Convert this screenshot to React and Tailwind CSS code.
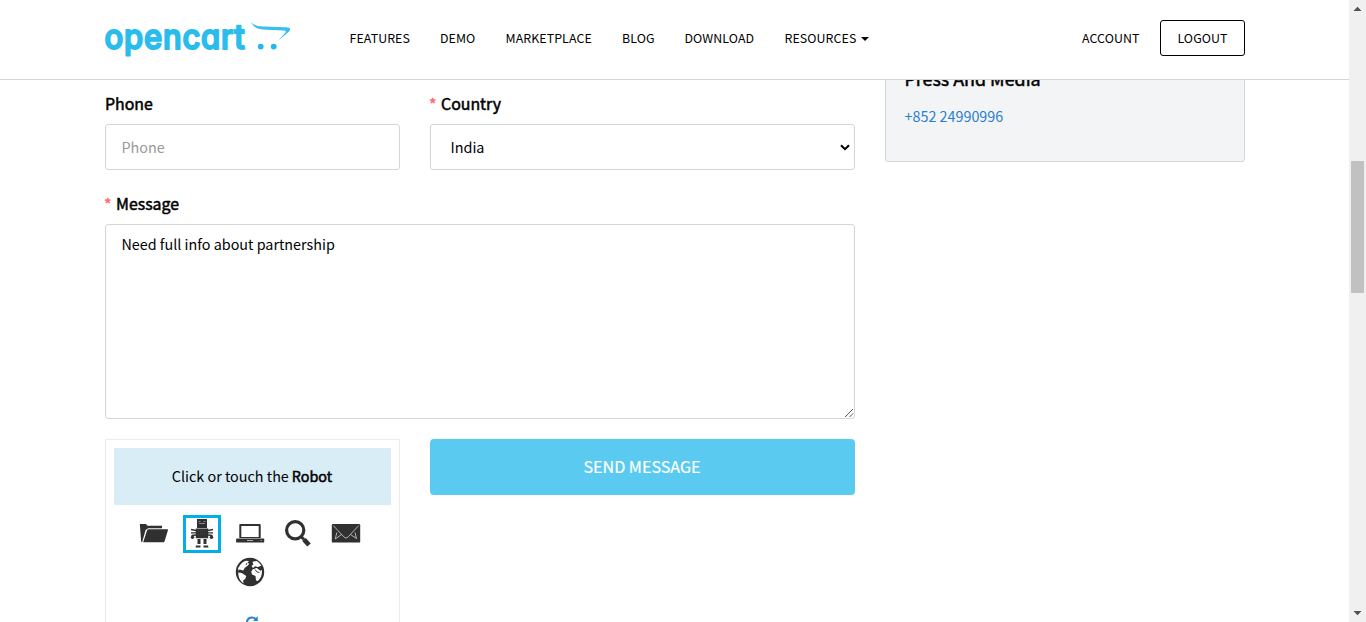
const navItems = [
  ['FEATURES', 'w-[90.5px]'],
  ['DEMO', 'w-[65.5px]'],
  ['MARKETPLACE', 'w-[116.5px]'],
  ['BLOG', 'w-[62.5px]'],
  ['DOWNLOAD', 'w-[100px]'],
];

function Logo() {
  return (
    <svg className="block h-[44px] w-[188px] shrink-0" viewBox="0 -3 188 44">
      <defs>
        <linearGradient id="sky" x1="0" y1="0" x2="0" y2="1">
          <stop offset="0" stopColor="#41c4f0" />
          <stop offset="1" stopColor="#22b8ee" />
        </linearGradient>
      </defs>
      <text
        x="0.6"
        y="29.6"
        fontFamily="Inter, sans-serif"
        fontSize="33.5"
        fontWeight="500"
        letterSpacing="0.8"
        textLength="141"
        lengthAdjust="spacingAndGlyphs"
        fill="#2bbcee"
        stroke="#2bbcee"
        strokeWidth="2"
        strokeLinejoin="round"
        style={{ fontFeatureSettings: '"cv11"' }}
      >
        opencart
      </text>
      <path
        d="M147 2.800C149 5.800 153 7.200 159 7.500L182 8.200C186 8.400 187.500 9.800 185 12.500L174.400 21.500L181 14C182.500 12.200 181.800 11.700 179.500 11.500L159 10.500C152 10 148.500 7 147 2.800Z"
        fill="url(#sky)"
      />
      <circle cx="156.700" cy="27.600" r="2.900" fill="#22b8ee" />
      <circle cx="169.700" cy="27.600" r="2.900" fill="#22b8ee" />
    </svg>
  );
}

function FolderIcon() {
  return (
    <svg className="h-8 w-8" viewBox="0 0 32 32" fill="#303030">
      <path d="M1.800 7H8l1.500 1.700H24v2.600H10.200L7.600 13 4.200 25H3.200Z" />
      <path d="M10.800 12.200H29.500c.5 0 .7.300.5.800L26.500 24.600c-.2.500-.6.700-1.100.7H5.200L9 13.400c.3-.8.900-1.200 1.800-1.200Z" />
    </svg>
  );
}

function RobotIcon() {
  return (
    <svg className="h-8 w-8 shrink-0" viewBox="0 0 32 32" fill="#303030">
      <path d="M11 1h10v9H11ZM9.800 10.500h12.400v9.700H9.800Z" />
      <path d="M11.500 21h3v5h-3ZM17.500 21h3v5h-3ZM10 27.500h4.500v2H9.500ZM17.500 27.500H22l.5 2h-5Z" />
      <path d="M12.500 3.500h2M17.500 3.500h2M13 5.500h6" stroke="#8a8a8a" strokeWidth="1" />
      <path
        d="M10 12.500 5 11.500M10 14.800H5M10 17 5.500 17.500M22 12.500 27 11.500M22 14.800h5M22 17l4.500.5"
        stroke="#303030"
        strokeWidth="1.300"
      />
      <circle cx="6.500" cy="19.300" r="1.700" />
      <circle cx="25.500" cy="19.300" r="1.700" />
      <path d="M12 13h8M12 16h8" stroke="#474747" strokeWidth="1" strokeDasharray="1 1" />
    </svg>
  );
}

function LaptopIcon() {
  return (
    <svg className="h-8 w-8" viewBox="0 0 32 32" fill="#303030">
      <path fillRule="evenodd" d="M6.500 7h19c.8 0 1.200.4 1.200 1.200V21H5.300V8.200C5.300 7.400 5.700 7 6.500 7Zm.8 2v11h17.400V9Z" />
      <path d="M3 21.500h26.500c.5 0 .7.300.7.700V25c0 .4-.2.600-.6.600H2.700c-.4 0-.6-.2-.6-.6v-2.800c0-.4.300-.7.900-.7Z" />
      <path d="M13 23.500h6" stroke="#b0b0b0" strokeWidth="1" />
      <path d="M26 23.500h2" stroke="#777" strokeWidth="1" />
    </svg>
  );
}

function SearchIcon() {
  return (
    <svg className="h-8 w-8" viewBox="0 0 32 32" fill="none" stroke="#303030">
      <circle cx="13.200" cy="12.200" r="8.600" strokeWidth="3.200" />
      <path d="m19 18.500 3 3" strokeWidth="3" />
      <path d="m22 21.500 5 5.500" strokeWidth="4.800" />
    </svg>
  );
}

function MailIcon() {
  return (
    <svg className="h-8 w-8" viewBox="0 0 32 32">
      <rect x="1.800" y="7" width="28.400" height="18.600" rx="1.200" fill="#303030" />
      <path d="M3.300 8.600 13.800 19.800c1.500 1.600 2.900 1.600 4.400 0L28.700 8.600M11.500 17.500 5.300 22M20.500 17.500l6 4M25 15.500l1.500 6M6.800 15.500 5.300 22" fill="none" stroke="#d5d5d5" strokeWidth="0.8" />
    </svg>
  );
}

function GlobeIcon() {
  return (
    <svg className="h-8 w-8" viewBox="0 0 32 32">
      <circle cx="16" cy="16" r="14.200" fill="#303030" />
      <g fill="#fff">
        <path d="M5.500 10c1.500-2.800 3.500-4.300 6.500-5.300l3 .3-1.500 1.700 1.800 1.100-2 2.200-2.500 1.800-1.500 2.700-3.800-1-1 1.200-.5-2.500Z" />
        <path d="m4.200 16.500 3.600.5 4.500 3-1.200 3-2 1.500.5 3c-3.500-2.500-5.400-6-5.400-11Z" />
        <path d="m18.500 5.800 4-.8c2 1 3.600 2.600 4.800 4.700l-3.500 1.300-2.800-.8-2 1.800-1.500-2 1.800-1.500Z" />
        <path d="m18.800 13.200 4-1.200 3.500 2.800 1.500-.8c.6 4.500-.8 8.200-4 11l-1.800-.5-.5-4.500-3.500-1.500-.8-2.800Z" />
      </g>
      <path d="m21 13.500 2 2.500 2.500.5M13 7l-1 2" fill="none" stroke="#303030" strokeWidth=".9" />
    </svg>
  );
}

function Scrollbar() {
  return (
    <div className="flex h-full w-[17px] shrink-0 flex-col items-center bg-[#f0f0f0]">
      <svg className="h-[17px] w-[17px] shrink-0" viewBox="0 0 17 17">
        <path d="m4.500 11 4-4.300 4 4.300Z" fill="#505050" />
      </svg>
      <div className="mt-[144px] h-[132px] w-[13px] bg-[#c1c1c1]" />
      <svg className="mt-auto h-[17px] w-[17px] shrink-0" viewBox="0 0 17 17">
        <path d="m4.500 6 4 4.300L12.500 6Z" fill="#505050" />
      </svg>
    </div>
  );
}

function Label({ text, required }) {
  return (
    <div className="flex h-6 items-start text-[15.9px] leading-6 [-webkit-text-stroke:0.5px_#000]">
      {required && (
        <span className="mr-[5px] w-[6px] -indent-px text-[16px] text-[#ff6b6b] [-webkit-text-stroke:0.5px_#ff6b6b]">*</span>
      )}
      <span>{text}</span>
    </div>
  );
}

export default function App() {
  return (
    <div className="flex h-[622px] w-[1366px] overflow-hidden bg-white font-['Noto_Sans_CJK_SC',sans-serif] text-black">
      <div className="flex h-full w-[1349px] flex-col">
        <header className="flex h-20 shrink-0 items-center border-b border-[#d5d6d8] pr-[104px] pb-[3px] pl-[104px] text-[12.4px] leading-5 tracking-[0.08px]">
          <Logo />
          <nav className="ml-[57.500px] flex">
            {navItems.map(([name, width]) => (
              <a key={name} className={width}>{name}</a>
            ))}
            <a className="flex items-center">
              <span className="w-[76.500px]">RESOURCES</span>
              <svg className="mt-0.5 h-1 w-2" viewBox="0 0 8 4"><path d="M0 0h8L4 4Z" /></svg>
            </a>
          </nav>
          <a className="ml-auto w-[78px]">ACCOUNT</a>
          <button className="h-9 w-[85px] rounded-[3px] border border-black">LOGOUT</button>
        </header>

        <main className="flex min-h-0 flex-1 items-start gap-[30px] overflow-hidden pl-[105px]">
          <form className="flex w-[750px] flex-col pt-3">
            <div className="flex gap-[30px]">
              <div className="w-[295px]">
                <Label text="Phone" />
                <div className="mt-2 flex h-[46px] items-center rounded-[3px] border border-[#d5d6d8] pl-[15.500px] text-[14.400px] text-[#999]">Phone</div>
              </div>
              <div className="w-[425px]">
                <Label text="Country" required />
                <div className="mt-2 flex h-[46px] items-center justify-between rounded-[3px] border border-[#d5d6d8] pr-1 pl-[19.500px] text-[14.400px]">
                  <span>India</span>
                  <svg className="h-[7px] w-[10px]" viewBox="0 0 10 7"><path d="m1 1.200 4 4 4-4" fill="none" stroke="#000" strokeWidth="2" /></svg>
                </div>
              </div>
            </div>
            <div className="mt-[22px]">
              <Label text="Message" required />
              <div className="mt-2 flex h-[195px] items-end justify-between rounded-[3px] border border-[#d5d6d8] pl-[15.500px]">
                <span className="self-start pt-[7px] text-[14.350px] leading-6">Need full info about partnership</span>
                <svg className="h-[10px] w-[10px]" viewBox="0 0 10 10"><path d="m1 9 8-8M5.500 9 9 5.500" fill="none" stroke="#555" strokeWidth="1" /></svg>
              </div>
            </div>
            <div className="mt-5 flex items-start gap-[30px]">
              <div className="h-[220px] w-[295px] shrink-0 border border-[#ebebeb] p-2">
                <div className="flex h-[57px] items-center justify-center gap-[3px] bg-[#d9edf7] pr-px pb-[2px] text-[14.350px]">
                  <span>Click or touch the</span>
                  <span className="[-webkit-text-stroke:0.5px_#000]">Robot</span>
                </div>
                <div className="mt-[10px] flex justify-center gap-[10px] pr-[5px]">
                  <div className="flex h-[38px] w-[38px] items-center justify-center pr-px pb-[2px]"><FolderIcon /></div>
                  <div className="flex h-[38px] w-[38px] items-center justify-center border-3 border-[#00aeea]"><RobotIcon /></div>
                  <div className="flex h-[38px] w-[38px] items-center justify-center pr-px pb-[2px]"><LaptopIcon /></div>
                  <div className="flex h-[38px] w-[38px] items-center justify-center pb-px"><SearchIcon /></div>
                  <div className="flex h-[38px] w-[38px] items-center justify-center pb-[2px]"><MailIcon /></div>
                </div>
                <div className="flex h-[38px] items-center justify-center pr-[5px] pb-px"><GlobeIcon /></div>
                <div className="mt-[25px] flex justify-center pr-px">
                  <svg className="h-3 w-3" viewBox="0 0 12 12" fill="none" stroke="#2a82d0" strokeWidth="2">
                    <path d="M1 6a5 4.700 0 0 1 8.700-3" />
                    <path d="M11.800 0v5H7Z" fill="#2a82d0" stroke="none" />
                  </svg>
                </div>
              </div>
              <button className="h-14 w-[425px] rounded-[4px] bg-[#5bcaf0] pr-px pb-[2px] text-[16.100px] text-white [-webkit-text-stroke:0.2px_#fff]">SEND MESSAGE</button>
            </div>
          </form>
          <aside className="-mt-5 h-[102px] w-[360px] rounded-[3px] border border-[#d5d6d8] bg-[#f3f4f6] pt-[5px] pl-[18.500px]">
            <h4 className="text-[17.900px] leading-6 [-webkit-text-stroke:0.5px_#000]">Press And Media</h4>
            <a className="mt-[14px] block text-[14.350px] leading-6 text-[#2a7fd0]">+852 24990996</a>
          </aside>
        </main>
      </div>
      <Scrollbar />
    </div>
  );
}
